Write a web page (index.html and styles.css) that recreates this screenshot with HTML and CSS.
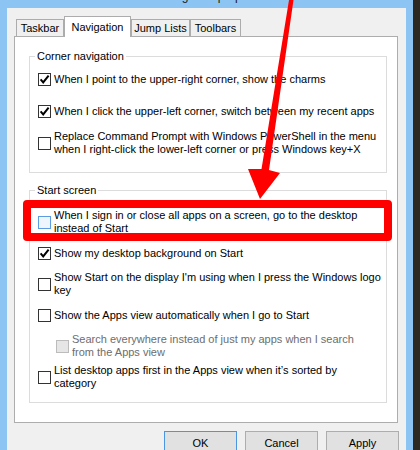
FILE: index.html
```html
<!DOCTYPE html>
<html>
<head>
<meta charset="utf-8">
<title>Taskbar and Navigation properties</title>
<link rel="stylesheet" href="styles.css">
</head>
<body>
<div class="window">
  <div class="titlebar"><span class="title">Taskbar and Navigation properties</span></div>
  <div class="dialog">
    <div class="tabs">
      <div class="tab w1">Taskbar</div>
      <div class="tab active w2">Navigation</div>
      <div class="tab w3">Jump Lists</div>
      <div class="tab w4">Toolbars</div>
    </div>
    <div class="panel">
      <fieldset class="group g1">
        <legend>Corner navigation</legend>
        <div class="rows">
          <div class="row"><span class="cb"><svg width="11" height="11" viewBox="0 0 11 11"><path d="M1.6 5.4 L4.2 8.4 L9.6 1.6" fill="none" stroke="#000" stroke-width="2"/></svg></span><span class="label">When I point to the upper-right corner, show the charms</span></div>
          <div class="row"><span class="cb"><svg width="11" height="11" viewBox="0 0 11 11"><path d="M1.6 5.4 L4.2 8.4 L9.6 1.6" fill="none" stroke="#000" stroke-width="2"/></svg></span><span class="label">When I click the upper-left corner, switch between my recent apps</span></div>
          <div class="row"><span class="cb"></span><span class="label">Replace Command Prompt with Windows PowerShell in the menu<br>when I right-click the lower-left corner or press Windows key+X</span></div>
        </div>
      </fieldset>
      <fieldset class="group g2">
        <legend>Start screen</legend>
        <div class="rows">
          <div class="row"><span class="cb hover"></span><span class="label">When I sign in or close all apps on a screen, go to the desktop<br>instead of Start</span></div>
          <div class="row"><span class="cb"><svg width="11" height="11" viewBox="0 0 11 11"><path d="M1.6 5.4 L4.2 8.4 L9.6 1.6" fill="none" stroke="#000" stroke-width="2"/></svg></span><span class="label">Show my desktop background on Start</span></div>
          <div class="row"><span class="cb"></span><span class="label">Show Start on the display I'm using when I press the Windows logo<br>key</span></div>
          <div class="row"><span class="cb"></span><span class="label">Show the Apps view automatically when I go to Start</span></div>
          <div class="row disabled"><span class="cb"></span><span class="label">Search everywhere instead of just my apps when I search<br>from the Apps view</span></div>
          <div class="row"><span class="cb"></span><span class="label">List desktop apps first in the Apps view when it’s sorted by<br>category</span></div>
        </div>
      </fieldset>
    </div>
    <div class="buttons">
      <button class="btn default">OK</button>
      <button class="btn">Cancel</button>
      <button class="btn">Apply</button>
    </div>
  </div>
</div>
<div class="highlight"></div>
<svg class="arrow" width="420" height="450" viewBox="0 0 420 450">
  <polygon points="289,0 293.5,0 269,170 280,173 260,199 248,169 261.5,169" fill="#ff0000"/>
</svg>
</body>
</html>
```
FILE: styles.css
```css
html, body {
  margin: 0;
  padding: 0;
}
body {
  width: 420px;
  height: 450px;
  overflow: hidden;
  position: relative;
  background: #2b2922;
  font-family: "Liberation Sans", Arial, sans-serif;
  font-size: 11px;
  color: #000;
}
.window {
  width: 413px;
  height: 470px;
  box-sizing: border-box;
  padding: 0 7px;
  background: #8cc5f4;
}
.titlebar {
  height: 8px;
  overflow: hidden;
}
.title {
  display: block;
  margin-top: -11px;
  line-height: 15px;
  font-size: 12px;
  padding-left: 82px;
  color: #1a1a1a;
  white-space: nowrap;
}
.dialog {
  background: #f0f0f0;
  padding: 8px 8px 0 7px;
  height: 470px;
}
.tabs {
  display: flex;
  align-items: flex-end;
  height: 20px;
  margin-left: 2px;
}
.tab {
  box-sizing: border-box;
  height: 17px;
  border: 1px solid #acacac;
  border-bottom: none;
  background: #f0f0f0;
  display: flex;
  align-items: center;
  justify-content: center;
  white-space: nowrap;
}
.tab.active {
  height: 21px;
  margin-bottom: -1px;
  background: #fff;
  position: relative;
  z-index: 1;
}
.w1 { width: 48px; }
.w2 { width: 67px; }
.w3 { width: 59px; }
.w4 { width: 51px; }
.panel {
  box-sizing: border-box;
  border: 1px solid #adadad;
  background: #fff;
  padding: 12px 10px 19px 14px;
}
.group {
  margin: 0;
  min-width: 0;
  border: 1px solid #dcdcdc;
  padding: 3px 8px 16px 8px;
}
.group legend {
  padding: 0 2px;
  margin-left: -3px;
  line-height: 14px;
}
.g2 {
  margin-top: 10px;
  padding-top: 12px;
  padding-bottom: 12px;
}
.rows {
  display: flex;
  flex-direction: column;
  gap: 6px;
}
.g2 .rows {
  gap: 5px;
}
.row {
  display: flex;
  align-items: center;
  gap: 3px;
  height: 26px;
}
.label {
  line-height: 13px;
  white-space: nowrap;
}
.cb {
  flex: none;
  width: 13px;
  height: 13px;
  box-sizing: border-box;
  border: 1px solid #333;
  background: #fff;
  display: flex;
  align-items: center;
  justify-content: center;
}
.cb.hover {
  border-color: #5b9de0;
  background: #eef5fc;
}
.row.disabled {
  margin-left: 18px;
}
.row.disabled .cb {
  border-color: #bcbcbc;
  background: #e6e6e6;
}
.row.disabled .label {
  color: #6d6d6d;
}
.buttons {
  display: flex;
  justify-content: flex-end;
  gap: 8px;
  margin-top: 8px;
  margin-right: -1px;
}
.btn {
  width: 73px;
  height: 23px;
  box-sizing: border-box;
  padding: 0;
  border: 1px solid #adadad;
  border-radius: 0;
  background: #e1e1e1;
  font: inherit;
  color: #000;
}
.btn.default {
  border-color: #4a96e0;
}
.highlight {
  position: absolute;
  left: 23px;
  top: 200px;
  width: 369px;
  height: 41px;
  box-sizing: border-box;
  border: 8px solid #ff0000;
  border-radius: 4px;
}
.arrow {
  position: absolute;
  left: 0;
  top: 0;
}
```
